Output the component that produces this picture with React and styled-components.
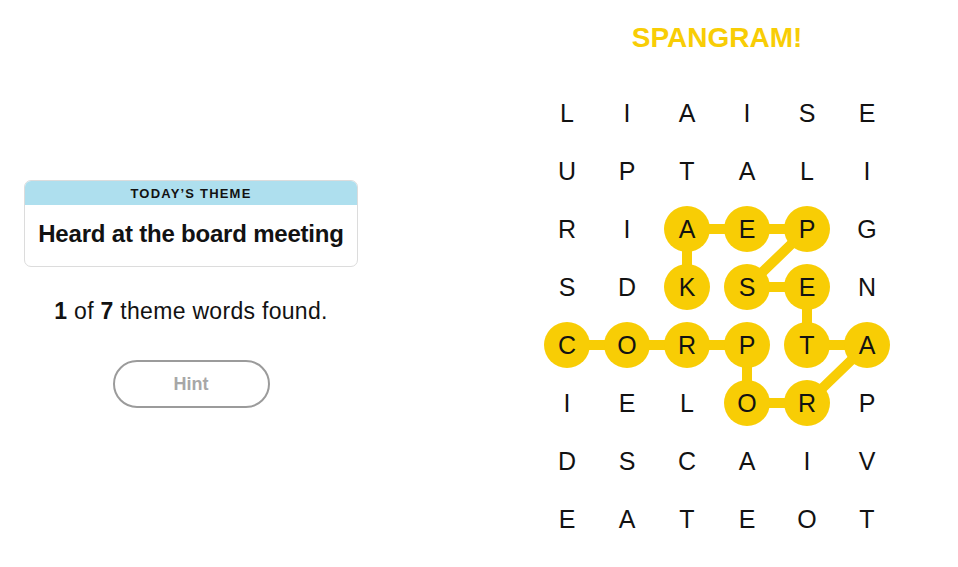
import React from 'react';
import styled, { createGlobalStyle } from 'styled-components';

const GlobalStyle = createGlobalStyle`
  body {
    margin: 0;
    background: #fff;
    font-family: 'Liberation Sans', Arial, sans-serif;
    color: #000;
  }
`;

const YELLOW = '#f8cd05';
const COL_W = 60;
const ROW_H = 58;
const DOT = 46;

const GRID = [
  'LIAISE',
  'UPTALI',
  'RIAEPG',
  'SDKSEN',
  'CORPTA',
  'IELORP',
  'DSCAIV',
  'EATEOT',
];

// spangram path as [row, col]
const SPANGRAM = [
  [4, 0], [4, 1], [4, 2], [4, 3], [5, 3], [5, 4], [4, 5],
  [4, 4], [3, 4], [3, 3], [2, 4], [2, 3], [2, 2], [3, 2],
];

const Page = styled.div`
  display: flex;
  align-items: flex-start;
  width: 958px;
  height: 567px;
  padding-left: 24px;
  box-sizing: border-box;
`;

const Sidebar = styled.div`
  width: 334px;
  padding-top: 180px;
  display: flex;
  flex-direction: column;
  align-items: center;
`;

const ThemeCard = styled.div`
  width: 100%;
  border: 1px solid #dcdcdc;
  border-radius: 7px;
  overflow: hidden;
  box-sizing: border-box;
`;

const ThemeHeader = styled.div`
  background: #aedfee;
  height: 24px;
  display: flex;
  align-items: center;
  justify-content: center;
  font-size: 13px;
  font-weight: 700;
  letter-spacing: 1.2px;
  color: #121212;
`;

const ThemeText = styled.div`
  height: 61px;
  display: flex;
  align-items: center;
  justify-content: center;
  font-size: 24px;
  font-weight: 700;
  letter-spacing: -0.2px;
  color: #121212;
  padding-bottom: 4px;
  box-sizing: border-box;
`;

const Progress = styled.p`
  margin: 31px 0 0;
  font-size: 23px;
  letter-spacing: 0.3px;
  color: #121212;

  b {
    font-weight: 700;
  }
`;

const HintButton = styled.button`
  margin-top: 35px;
  width: 157px;
  height: 48px;
  border: 2px solid #9b9b9b;
  border-radius: 24px;
  background: #fff;
  color: #a7a7a7;
  font-family: inherit;
  font-size: 18px;
  font-weight: 700;
`;

const Board = styled.div`
  margin-left: 179px;
  display: flex;
  flex-direction: column;
  align-items: center;
  width: ${COL_W * 6}px;
`;

const Title = styled.h2`
  margin: 21px 0 0;
  height: 34px;
  line-height: 34px;
  font-size: 28px;
  font-weight: 700;
  color: ${YELLOW};
  letter-spacing: 0;
`;

const Grid = styled.div`
  position: relative;
  margin-top: 29px;
  display: grid;
  grid-template-columns: repeat(6, ${COL_W}px);
  grid-auto-rows: ${ROW_H}px;
`;

const Links = styled.svg`
  position: absolute;
  inset: 0;
  pointer-events: none;
`;

const Cell = styled.div`
  position: relative;
  display: flex;
  align-items: center;
  justify-content: center;
`;

const Letter = styled.span`
  width: ${DOT}px;
  height: ${DOT}px;
  border-radius: 50%;
  display: flex;
  align-items: center;
  justify-content: center;
  font-size: 25px;
  color: #121212;
  background: ${(p) => (p.$found ? YELLOW : 'transparent')};
  position: relative;
  z-index: ${(p) => (p.$found ? 0 : 1)};
`;

const center = ([r, c]) => [c * COL_W + COL_W / 2, r * ROW_H + ROW_H / 2];

const App = () => {
  const found = new Set(SPANGRAM.map(([r, c]) => `${r}-${c}`));
  const points = SPANGRAM.map(center);

  return (
    <>
      <GlobalStyle />
      <Page>
        <Sidebar>
          <ThemeCard>
            <ThemeHeader>TODAY’S THEME</ThemeHeader>
            <ThemeText>Heard at the board meeting</ThemeText>
          </ThemeCard>
          <Progress>
            <b>1</b> of <b>7</b> theme words found.
          </Progress>
          <HintButton>Hint</HintButton>
        </Sidebar>

        <Board>
          <Title>SPANGRAM!</Title>
          <Grid>
            <Links width={COL_W * 6} height={ROW_H * 8}>
              <polyline
                points={points.map((p) => p.join(',')).join(' ')}
                fill="none"
                stroke={YELLOW}
                strokeWidth="10"
                strokeLinejoin="round"
              />
            </Links>
            {GRID.map((row, r) =>
              row.split('').map((ch, c) => (
                <Cell key={`${r}-${c}`}>
                  <Letter $found={found.has(`${r}-${c}`)}>{ch}</Letter>
                </Cell>
              ))
            )}
          </Grid>
        </Board>
      </Page>
    </>
  );
};

export default App;
